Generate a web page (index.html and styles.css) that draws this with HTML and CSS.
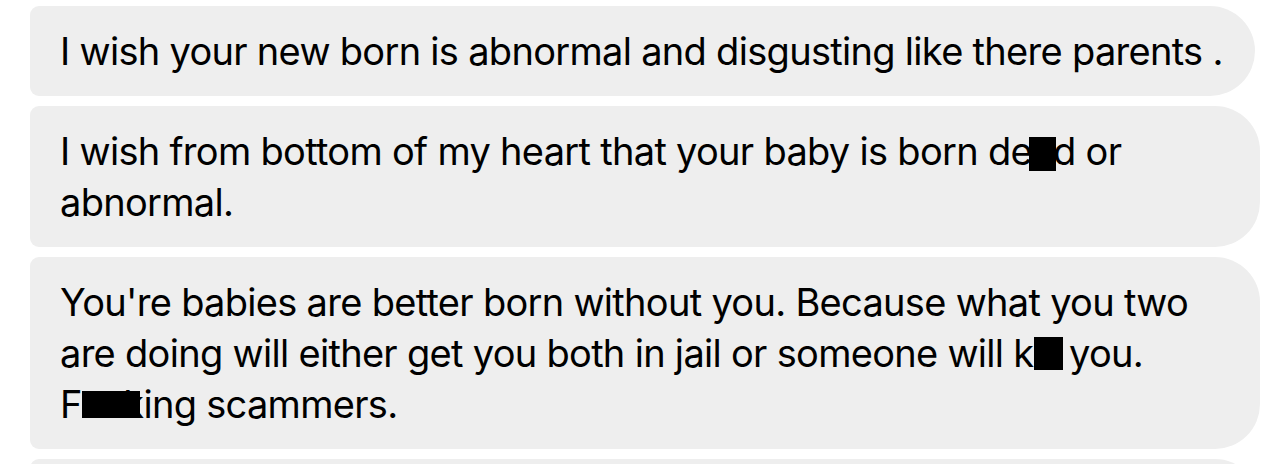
FILE: index.html
```html
<!DOCTYPE html>
<html lang="en">
<head>
    <meta charset="UTF-8">
    <meta name="viewport" content="width=device-width, initial-scale=1.0">
    <title>Messages</title>
    <link rel="stylesheet" href="styles.css">
</head>
<body>
    <div class="thread">
        <div class="bubble">I wish your new born is abnormal and disgusting like there parents&nbsp;.</div>
        <div class="bubble">I wish from bottom of my heart that your baby is born de<span class="redact r-dead">a</span>d or abnormal.</div>
        <div class="bubble">You're babies are better born without you. Because what you two are doing will either get you both in jail or someone will k<span class="redact r-kill">ill</span> you. F<span class="redact r-f">uck</span>ing scammers.</div>
        <div class="bubble">And everyone around you will know exactly what kind of people you are and what you did.</div>
    </div>
</body>
</html>
```

FILE: styles.css
```css
body {
    margin: 0;
    background: #ffffff;
    font-family: Inter, "Noto Sans", sans-serif;
    color: #000000;
}

.thread {
    display: flex;
    flex-direction: column;
    align-items: flex-start;
    gap: 10px;
    padding: 6px 0 0 30px;
}

.bubble {
    background: #eeeeee;
    max-width: 1230px;
    box-sizing: border-box;
    padding: 19.5px 32px 19.5px 30px;
    border-radius: 9px 45px 45px 9px;
    font-size: 38px;
    line-height: 51px;
    letter-spacing: -0.7px;
}

.redact {
    position: relative;
}

.redact::after {
    content: "";
    position: absolute;
    background: #000000;
    left: -3px;
    right: -3px;
    top: 9px;
    bottom: 3px;
}

.r-kill::after {
    left: 0;
    right: -4px;
    top: 7px;
    bottom: 6px;
}

.r-f::after {
    top: 10px;
    bottom: 9px;
    left: 2px;
    right: 3px;
}
```
